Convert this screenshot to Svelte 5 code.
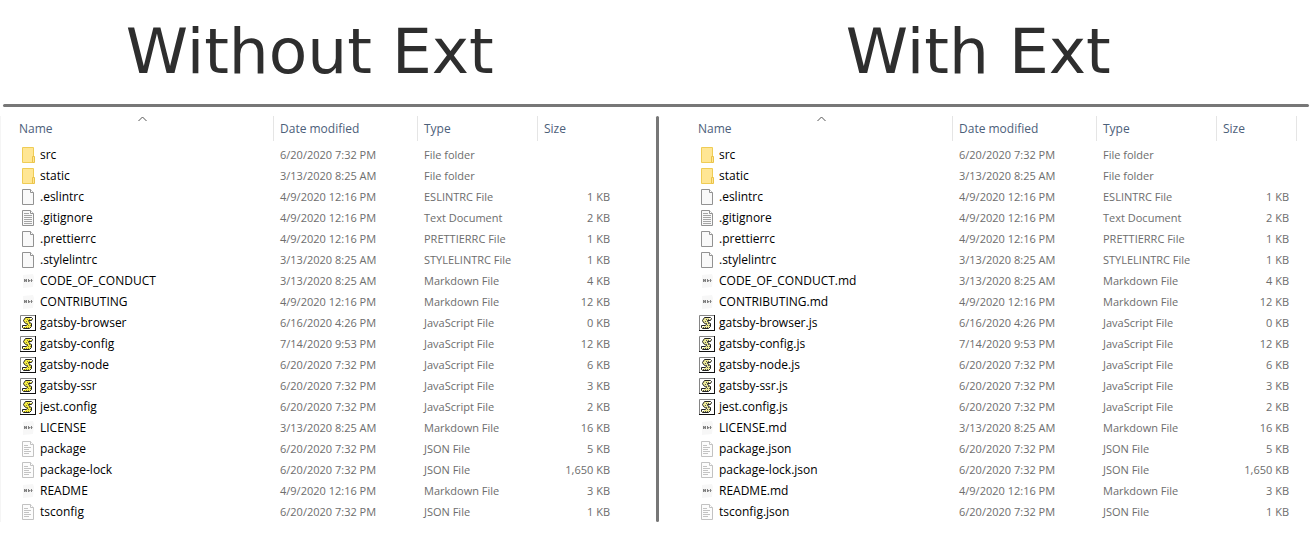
<script>
  const rows = [
    ['src', '', '6/20/2020 7:32 PM', 'File folder', '', 'folder'],
    ['static', '', '3/13/2020 8:25 AM', 'File folder', '', 'folder'],
    ['.eslintrc', '', '4/9/2020 12:16 PM', 'ESLINTRC File', '1 KB', 'blank'],
    ['.gitignore', '', '4/9/2020 12:16 PM', 'Text Document', '2 KB', 'text'],
    ['.prettierrc', '', '4/9/2020 12:16 PM', 'PRETTIERRC File', '1 KB', 'blank'],
    ['.stylelintrc', '', '3/13/2020 8:25 AM', 'STYLELINTRC File', '1 KB', 'blank'],
    ['CODE_OF_CONDUCT', '.md', '3/13/2020 8:25 AM', 'Markdown File', '4 KB', 'md'],
    ['CONTRIBUTING', '.md', '4/9/2020 12:16 PM', 'Markdown File', '12 KB', 'md'],
    ['gatsby-browser', '.js', '6/16/2020 4:26 PM', 'JavaScript File', '0 KB', 'js'],
    ['gatsby-config', '.js', '7/14/2020 9:53 PM', 'JavaScript File', '12 KB', 'js'],
    ['gatsby-node', '.js', '6/20/2020 7:32 PM', 'JavaScript File', '6 KB', 'js'],
    ['gatsby-ssr', '.js', '6/20/2020 7:32 PM', 'JavaScript File', '3 KB', 'js'],
    ['jest.config', '.js', '6/20/2020 7:32 PM', 'JavaScript File', '2 KB', 'js'],
    ['LICENSE', '.md', '3/13/2020 8:25 AM', 'Markdown File', '16 KB', 'md'],
    ['package', '.json', '6/20/2020 7:32 PM', 'JSON File', '5 KB', 'json'],
    ['package-lock', '.json', '6/20/2020 7:32 PM', 'JSON File', '1,650 KB', 'json'],
    ['README', '.md', '4/9/2020 12:16 PM', 'Markdown File', '3 KB', 'md'],
    ['tsconfig', '.json', '6/20/2020 7:32 PM', 'JSON File', '1 KB', 'json']
  ];
  const panels = [
    { title: 'Without Ext', ext: false },
    { title: 'With Ext', ext: true }
  ];
</script>

{#snippet icon(kind, pale)}
  <svg width="16" height="16" viewBox="0 0 16 16" aria-hidden="true">
    {#if kind === 'folder'}
      <path d="M2.500.5h11v15h-11z" fill="#ffe694" stroke="#efcc55" />
      <path d="M12.500 9.500h2v6h-2z" fill="#ffe694" stroke="#eac349" />
    {:else if kind === 'md'}
      <path d="M3 2l10-1 1 3-1 10-10 1z" fill="#f7f7f7" />
      <path d="M4.500 6v3M5.500 6.500v2M6.500 6v3M8.500 6v3M9.500 7v1.500M11.500 6v3M10.500 7.500h2" stroke="#808080" fill="none" />
    {:else if kind === 'js'}
      <path d="M.5.5h15v15H.5z" fill="#fff" stroke="#858585" />
      <path d="M0 15.500h16M15.500 0v16" stroke="#111" />
      <path
        d="M5.500 2.500h6l1 1-1 2h-3l1 2 2 1v3l-2 2h-6l-1-1v-2h4l1-1-3-2-1-2z"
        fill={pale ? '#eeea96' : '#f7ed45'}
        stroke="#222"
      />
      <path d="M7 4.500h4M6 6.500h3M7 8.500h3M8 10.500h3M4 12.500h5" stroke={pale ? '#555' : '#8b831c'} stroke-dasharray="1 1" />
      <path d="M10 3.500h2M3 11.500h2" stroke="#fff" />
    {:else}
      <path
        d="M2.500.5h8l3 3v12h-11z"
        fill={kind === 'json' ? '#fcfcfc' : '#f9f9f9'}
        stroke={kind === 'json' ? '#c2c2c2' : '#929292'}
      />
      <path d="M10.500.5v3h3" fill="#fff" stroke={kind === 'json' ? '#c2c2c2' : '#929292'} />
      {#if kind === 'text'}
        <path d="M4 3.500h5M4 5.500h8M4 7.500h8M4 9.500h8M4 11.500h8M4 13.500h8" stroke="#a5a5a5" />
      {:else if kind === 'json'}
        <path d="M4 4.500h4M4 6.500h7M4 8.500h5M4 10.500h7M4 12.500h5" stroke="#c3c3c3" />
      {/if}
    {/if}
  </svg>
{/snippet}

<main>
  <header>
    {#each panels as panel}
      <h1>{panel.title}</h1>
    {/each}
  </header>
  <div class="rule"></div>
  <div class="panels">
    {#each panels as panel}
      <section class:ext={panel.ext} aria-label={panel.title}>
        <table>
          <thead>
            <tr>
              <th class="name">
                Name
                <svg class="sort" width="9" height="6" viewBox="0 0 9 6" aria-hidden="true">
                  <path d="M.5 5l4-4 4 4" fill="none" stroke="#555" />
                </svg>
              </th>
              <th class="date">Date modified</th>
              <th class="type">Type</th>
              <th class="size">Size</th>
            </tr>
          </thead>
          <tbody>
            {#each rows as [name, suffix, date, type, size, kind]}
              <tr>
                <td><span class="file">{@render icon(kind, panel.ext)}<span>{name}{panel.ext ? suffix : ''}</span></span></td>
                <td>{date}</td>
                <td>{type}</td>
                <td class="number">{size}</td>
              </tr>
            {/each}
          </tbody>
        </table>
      </section>
      {#if !panel.ext}<div class="divider"></div>{/if}
    {/each}
  </div>
</main>

<style>
  :global(body) {
    margin: 0;
    background: #fff;
  }
  main {
    color: #6d6d6d;
    font: 11px/20px "Open Sans", "Noto Sans", sans-serif;
  }
  header {
    display: grid;
    grid-template-columns: 1fr 1fr;
    height: 104px;
  }
  h1 {
    margin: 0;
    padding-right: 38px;
    color: #2e2e2e;
    font: 400 63px/104px "DejaVu Sans", sans-serif;
    text-align: center;
    white-space: nowrap;
  }
  h1:last-child { padding-right: 16px; }
  .rule {
    height: 3px;
    margin: 0 6px 0 3px;
    border-radius: 2px;
    background: #777;
  }
  .panels {
    display: grid;
    grid-template-columns: 1fr 3px 1fr;
    margin-top: 9px;
  }
  .divider {
    border-radius: 2px;
    background: #777;
  }
  section {
    padding-left: 2px;
    border-left: 1px solid #f5f5f5;
  }
  section.ext {
    padding-left: 23px;
    border-left: 0;
  }
  table {
    width: 615px;
    table-layout: fixed;
    border-collapse: separate;
    border-spacing: 0;
  }
  tbody::before {
    display: table-row;
    height: 3px;
    content: "";
  }
  th, td {
    box-sizing: border-box;
    padding: 0 6px;
    text-align: left;
    font-weight: 400;
    white-space: nowrap;
  }
  th {
    position: relative;
    height: 25px;
    border-right: 1px solid #e5e5e5;
    color: #4c607a;
    font-size: 12px;
  }
  .name { width: 271px; padding-left: 16px; }
  .date { width: 144px; }
  .type { width: 120px; }
  .size { width: 80px; }
  section:not(.ext) .size { border-right: 0; }
  .sort {
    position: absolute;
    top: 0;
    left: 50%;
  }
  td { height: 21px; }
  td:first-child { padding-left: 17px; }
  .file {
    display: flex;
    align-items: center;
    gap: 4px;
    color: #000;
    font-size: 12px;
  }
  svg { flex: none; }
  td.number { padding-right: 8px; text-align: right; }
</style>
